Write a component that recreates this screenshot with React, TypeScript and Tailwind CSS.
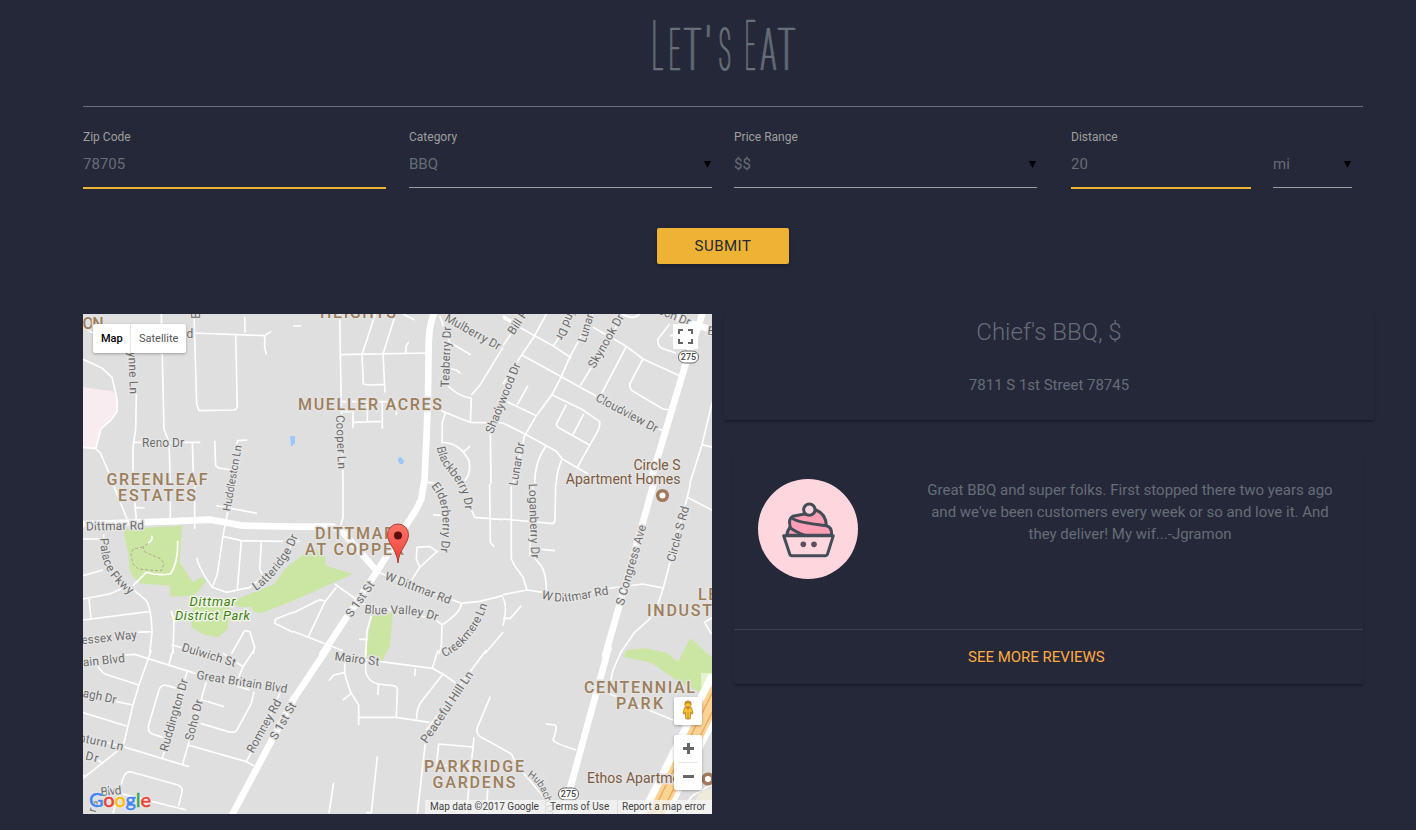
import React from "react";

const roadGroups: { at: string; thin: string; major?: string }[] = [
  {
    at: "translate(0 0) scale(.33333)",
    thin:
      "M0 136L58 163L87 190L102 255V292L85 317L54 345L38 404L52 417L75 470L90 510 M0 400L38 404 M0 40L25 55H40 M235 0L243 345L258 385L262 510 M160 240L158 345L150 400V510 M150 385H352 M328 385L332 510 M333 0L341 270L348 290L455 288L463 280L458 60 M330 57L545 65L565 52 M545 65V100L550 122 M485 8L486 57 M395 380L398 455L407 462L445 468 M493 378L465 380L460 390",
  },
  {
    at: "translate(210 0) scale(.33333)",
    thin:
      "M140 0L142 122L150 510 M0 36H25 M142 122L405 117 M247 0L207 122L211 210L228 213L275 211 M308 0L270 120L276 236 M347 85L340 95L338 117 M330 0L365 18 M142 263H310 M180 290V342 M180 325L268 322 M223 270V322 M268 265V344 M310 265V303 M145 293H180 M440 5L470 85L533 122 M460 210Q490 245 535 253L532 325 M470 163L490 168L502 178 M535 243L560 215L630 100 M445 290L530 325L630 327 M457 298L448 325L447 385Q500 385 528 440Q535 480 515 500 M512 413L531 397 M592 350L594 510 M405 505L440 508",
    major: "M426 -10Q408 30 407 90L405 250L400 380L394 510",
  },
  {
    at: "translate(420 0) scale(.33333)",
    thin:
      "M0 12L95 65L150 95L205 132 M130 0L95 65L50 132L0 210 M55 122L175 188L280 247 M465 345L490 352 M270 40L370 97L420 135L530 185 M270 0L200 130L175 188L148 240L100 305L65 365L30 510 M152 95L175 60 M370 97L295 240 M345 30L232 215 M420 135L380 210Q380 228 395 235L480 285L503 288 M148 243L235 285L290 322Q292 335 285 350L223 460 M190 272L160 330Q160 338 170 343L258 392 M242 300L210 362 M75 215L43 272 M0 257L100 305 M0 327L70 362L130 395L160 412L178 435L255 480 M130 395Q95 440 95 510 M178 435Q160 470 160 510 M355 0Q395 20 410 0 M500 30L465 75Q463 95 475 102L520 118 M500 65H520 M630 255L597 392L560 510 M597 392L630 400 M0 95L30 50 M0 5L25 20",
    major: "M600 -10L590 25L545 160L440 510 M490 -5L560 28L640 50",
  },
  {
    at: "translate(0 170) scale(.33333)",
    thin:
      "M90 0L132 105 M150 0L160 105 M155 70L185 72 M262 0V105 M335 0V135 M0 165H62V150 M0 275L60 258 M155 320L190 350Q205 375 207 445L200 510 M125 310L80 330L0 345 M18 345L24 405 M0 408L197 383 M155 445L207 443 M150 305L190 265Q220 275 262 270Q285 240 284 170 M435 80L420 155L403 270L388 310 M400 65L522 88 M342 222Q345 250 388 310L430 325L500 310L570 255L630 180 M420 157L475 170L600 172 M475 170L463 315 M535 175L530 255L537 270 M630 385L578 405L575 418L630 445 M265 380L273 410L270 510 M265 483L295 490 M445 510L485 440L500 442L515 490L510 510 M205 155Q213 165 195 178",
    major: "M0 120L260 112L385 107L480 125L630 128",
  },
  {
    at: "translate(210 170) scale(.33333)",
    thin:
      "M150 0V100L142 128 M590 0L592 175L603 188 M530 65L545 100L630 107 M420 92L445 95 M355 290L380 250L435 200 M380 250L370 225L372 190L410 187L435 205 M255 265L505 358L560 352L630 335 M505 358Q505 385 447 423L445 490L438 510 M425 405L447 423 M125 300L210 360L425 405 M130 310L95 355L45 460 M0 387L80 347L98 352 M0 442L150 500 M198 466H225 M235 395L222 440L218 510 M630 445L575 510 M0 172H20",
    major: "M0 128H120L150 145L255 265 M393 -5L385 45Q370 80 345 115L250 265L85 515",
  },
  {
    at: "translate(420 170) scale(.33333)",
    thin:
      "M25 0V225L35 245L60 280L72 318 M0 105L150 119L156 110L158 0 M90 0L80 215 M105 195L156 200 M90 215L105 235Q130 255 130 320 M0 332L72 318L120 325L190 340L325 312L420 300L480 312 M0 340Q15 370 0 425 M0 403H22L55 365 M562 0L553 40L480 315L465 360L440 405L395 445L350 510 M553 40L630 80 M630 400L605 415L625 450",
    major: "M452 0L305 520",
  },
  {
    at: "translate(0 336) scale(.33333)",
    thin:
      "M125 15L155 13L330 68L500 120 M205 0L168 105L150 165L120 290 M45 50Q60 72 75 75L168 105 M100 155L150 165 M0 188L130 228 M270 0L258 42 M0 260L120 290L318 350 M120 290L0 385 M45 330L60 342 M0 375L8 382 M312 65L238 325 M292 118L245 105Q232 107 228 120L197 225Q193 245 208 252L240 262 M370 95L298 345 M358 150L423 170 M353 220L435 245Q455 250 462 240L505 160L513 125 M315 285L490 335L512 347 M490 335L560 200L590 130 M513 0L480 50L460 100 M420 10L480 50 M90 490L120 385Q128 362 145 366L285 405Q300 412 297 425L287 468 M90 425L310 480",
    major: "M636 140L447 495",
  },
  {
    at: "translate(210 336) scale(.33333)",
    thin:
      "M155 40V68Q165 110 175 130L197 165V225 M155 68L122 75L108 92 M175 130L150 150 M218 0V65Q225 95 255 102L300 107Q315 110 313 120L310 200 M257 102L254 135 M197 202H310L410 217 M150 20L418 55L450 72L490 100 M367 55L365 78 M418 55L435 0 M450 72L385 155Q370 175 371 207 M580 0L400 240 M397 280L373 490 M592 140L552 235Q550 255 565 262L630 298 M540 291L437 282L430 345L540 350 M543 262L520 490 M253 320L235 488H220 M122 398L108 490 M585 400L580 490",
    major: "M107 -10L0 150",
  },
  {
    at: "translate(420 336) scale(.33333)",
    thin:
      "M0 298L25 312L45 350L130 450L140 490 M128 222L158 225Q163 235 150 270Q155 280 220 300 M357 0L330 60L315 130L510 210 M545 490Q550 440 590 425L630 400",
    major: "M318 -10L200 420L178 495",
  },
];

type Label = [string, number, number, number, number?, number?];

/* text, centre x, centre y, angle, length, size */
const roadLabels: Label[] = [
  ["Mulberry Dr", 473, 332, 29, 62],
  ["Teaberry Dr", 446, 357, -88, 61],
  ["Shadywood Dr", 503, 398, -68, 75],
  ["Cooper Ln", 341, 442, 88, 54],
  ["Cloudview Dr", 627, 413, 28, 69],
  ["Skynook Dr", 606, 341, -60, 60],
  ["Lunar Dr", 588, 321, -73, 44],
  ["Ruskind Dr", 571, 314, 115, 56],
  ["Bill Price", 523, 314, -57, 46],
  ["Mason Dr", 667, 313, 22, 50],
  ["Lunar Dr", 517, 464, -80, 44],
  ["Loganberry Dr", 534, 521, 88, 75],
  ["S Congress Ave", 631, 565, -74, 83],
  ["Circle S Rd", 678, 534, -75, 57],
  ["W Dittmar Rd", 418, 588, 21, 70],
  ["S 1st St", 360, 599, -55, 41],
  ["Mairo St", 357, 659, 7, 45],
  ["Peaceful Hill Ln", 447, 707, -56, 84],
  ["Great Britain Blvd", 242, 682, 9, 92],
  ["Romney Rd", 264, 726, -61, 59],
  ["S 1st St", 283, 721, -60, 41],
  ["Soho Dr", 194, 720, -76, 42],
  ["Ruddington Dr", 174, 715, -74, 75],
  ["Dulwich St", 209, 655, 17, 56],
  ["Chamberlain Blvd", 78, 663, -6, 94],
  ["Wessex Way", 104, 638, -6, 66],
  ["Armagh Dr", 89, 694, 12, 56],
  ["Vinturn Ln", 96, 741, 12, 56],
  ["Dr", 92, 757, 14, 13],
  ["Blvd", 111, 791, -5, 21],
  ["rs", 93, 806, -78, 12],
  ["Dittmar Rd", 115, 526, -1, 58],
  ["Huddleston Ln", 232, 478, -80, 67, 11],
  ["Reno Dr", 163, 443, 0, 42],
  ["Lynne Ln", 133, 370, 88, 48],
  ["d", 190, 334, 0, 7],
  ["B", 196, 315, -90, 8],
  ["E", 711, 331, 10, 8],
];

const curvedLabels = [
  { id: "elderberry", text: "Elderberry Dr", d: "M431 486C441 498 446 512 440 556", size: 12, length: 69 },
  { id: "blackberry", text: "Blackberry Dr", d: "M437 447C440 475 466 476 465 516", size: 12, length: 70 },
  { id: "dittmar-east", text: "W Dittmar Rd", d: "M541 598C565 607 585 597 618 593", size: 12, length: 69 },
  { id: "blue-valley", text: "Blue Valley Dr", d: "M364 613C385 617 405 608 442 623", size: 12, length: 74 },
  { id: "creekmere", text: "Creekmere Ln", d: "M444 657C462 650 482 628 489 599", size: 12, length: 70 },
  { id: "palace", text: "Palace Pkwy", d: "M100 538C101 570 112 582 138 601", size: 12, length: 67 },
  { id: "latteridge", text: "Latteridge Dr", d: "M256 591C275 578 290 558 299 534", size: 12, length: 70 },
  { id: "hubach", text: "Hubach Ln", d: "M527 776C540 783 546 797 550 824", size: 10, length: 47 },
];

const areaLabels: [string, number, number, number][] = [
  ["ON", 93, 323, 21],
  ["HEIGHTS", 358, 312, 76],
  ["MUELLER ACRES", 370, 404, 144],
  ["GREENLEAF", 157, 479, 101],
  ["ESTATES", 157, 495, 78],
  ["DITTMAR", 354.5, 533, 79],
  ["AT COPPER", 354.5, 549, 99],
  ["LEE", 713, 594, 30],
  ["INDUSTRIAL", 700, 610, 106],
  ["CENTENNIAL", 639.5, 687, 111],
  ["PARK", 639.5, 703, 47],
  ["PARKRIDGE", 474, 766, 100],
  ["GARDENS", 474, 782, 83],
];

function Highway({ x, y }: { x: number; y: number }) {
  return (
    <g transform={`translate(${x} ${y})`}>
      <rect x="-10" y="-6" width="20" height="12" rx="6" fill="#fff" stroke="#666" />
      <text textAnchor="middle" y="3.2" fontSize="9" fontWeight="500" fill="#444">275</text>
    </g>
  );
}

function MapDrawing() {
  return (
    <svg className="block h-[500px] w-[629px] font-['Roboto',sans-serif]" viewBox="0 0 629 500">
      <rect width="629" height="500" fill="#dfdfdf" />
      <g transform="scale(.33333)" fill="#f8ecf0">
        <path d="M0 220L90 232L102 255V292L85 317L54 345L38 404L0 400Z" />
      </g>
      <g fill="#9ec6fa">
        <path d="M207 122h5v8h-2v2h-2z" />
        <path d="M315 144l3-1 3 4-1 3-3 0-2-3z" />
      </g>
      <g fill="#cbe6a3">
        <g transform="translate(0 170) scale(.33333)">
          <path d="M120 135L298 125L290 235L330 295L355 278L370 290L350 318L330 335L262 338L260 305L170 298L148 275L140 255L135 205Z" />
          <path d="M330 350L440 345L435 435L405 460L365 452L325 430L328 395Z" />
          <path d="M440 355L500 330L575 300L605 255L690 190L725 215L728 245L810 270L630 350L535 388L510 382L505 368L470 370Z" />
        </g>
        <g transform="translate(210 170) scale(.33333)">
          <path d="M240 390L300 385L290 490L275 515L269 535L215 530L228 440Z" />
        </g>
        <g transform="translate(420 336) scale(.33333)">
          <path d="M360 20L370 0L430 -5L490 8L525 35L562 -35L630 25V110L600 130L545 105L490 70L445 38Z" />
        </g>
      </g>
      <path d="M60 233L50 235L48 240L50 250L55 255L78 257L81 250L78 245L62 238L60 233L68 227" fill="none" stroke="#b5a596" strokeDasharray="3 2" />
      <g fill="none" stroke="#fff" strokeLinejoin="round">
        {roadGroups.map((group) => (
          <g key={group.at} transform={group.at}>
            <path d={group.thin} strokeWidth="5" />
            {group.major && <path d={group.major} strokeWidth="20" />}
          </g>
        ))}
      </g>
      <g transform="translate(420 336) scale(.33333)" fill="none">
        <path d="M560 490L590 425L630 415V490Z" fill="#eeebdd" />
        <path d="M655 90L440 520" stroke="#fff" strokeWidth="84" />
        <path d="M655 100L447 515" stroke="#fbd394" strokeWidth="48" />
        <path d="M647 90L437 510M671 100L460 520" stroke="#e8ab5f" strokeWidth="4" />
      </g>
      <g transform="translate(-83 -314)" stroke="#e4e4e4" strokeWidth="3" strokeLinejoin="round" paintOrder="stroke">
        <g fill="#6c6c6c" fontSize="12" textAnchor="middle">
          {roadLabels.map(([text, x, y, angle, length, size], i) => (
            <text key={i} transform={`translate(${x} ${y}) rotate(${angle})`} y="4" textLength={length} fontSize={size ?? 12}>
              {text}
            </text>
          ))}
        </g>
        <g fill="#6c6c6c">
          {curvedLabels.map(({ id, text, d, size, length }) => (
            <React.Fragment key={id}>
              <path id={id} d={d} fill="none" stroke="none" />
              <text fontSize={size} textLength={length}>
                <textPath href={`#${id}`} textLength={length}>{text}</textPath>
              </text>
            </React.Fragment>
          ))}
        </g>
        <g fill="#9d7f5c" fontSize="16" fontWeight="500" textAnchor="middle">
          {areaLabels.map(([text, x, y, length]) => (
            <text key={text} x={x} y={y + 5.6} textLength={length}>
              {text}
            </text>
          ))}
        </g>
        <g fill="#7c5b40" fontSize="14">
          <text x="680.5" y="470" textAnchor="end">Circle S</text>
          <text x="680.5" y="484" textAnchor="end">Apartment Homes</text>
          <text x="587" y="783">Ethos Apartments</text>
        </g>
        <g fill="#3f7f12" fontSize="13" fontStyle="italic" textAnchor="middle" stroke="#f0f5e8">
          <text x="212.5" y="606" textLength="46">Dittmar</text>
          <text x="212.5" y="620" textLength="75">District Park</text>
        </g>
      </g>
      <g fill="#fff" stroke="#a1795c" strokeWidth="3.5">
        <circle cx="579.5" cy="181.5" r="4.8" />
        <circle cx="625" cy="465" r="4.8" />
      </g>
      <Highway x={605.5} y={43} />
      <Highway x={485.5} y={480} />
      <g transform="translate(315 0)">
        <path d="M0 249C-1 235 -10.5 230 -10.5 220.5A10.5 10.5 0 0 1 10.5 220.5C10.5 230 1 235 0 249Z" fill="url(#pin)" stroke="#b23a30" />
        <circle cy="221.5" r="4" fill="#5c100d" />
      </g>
      <defs>
        <linearGradient id="pin" x1="0" y1="0" x2="0" y2="1">
          <stop stopColor="#fb7469" />
          <stop offset="1" stopColor="#ef4035" />
        </linearGradient>
      </defs>
    </svg>
  );
}

function Pegman() {
  return (
    <svg className="h-[20px] w-[14px]" viewBox="0 0 14 20">
      <path d="M3.5 7.5h7l1.5 6-1.7.5-.6-2-.5 7H4.8l-.5-7-.6 2L2 13.5z" fill="#fbc02d" stroke="#a9812d" strokeWidth=".8" />
      <path d="M5 7.5h4L7 10z" fill="#e77726" />
      <path d="M7 12v7" stroke="#b98620" strokeWidth=".8" />
      <circle cx="7" cy="4" r="3.2" fill="#fbbf2a" stroke="#a9812d" strokeWidth=".8" />
      <path d="M4 2.8h6" stroke="#98752b" />
    </svg>
  );
}

function RestaurantMap() {
  return (
    <section className="relative h-[500px] w-[629px] shrink-0 overflow-hidden text-[11px]">
      <MapDrawing />
      <div className="absolute left-[10px] top-[10px] flex h-[29px] w-[93px] rounded-[2px] bg-white leading-[29px] shadow-[0_1px_3px_rgba(0,0,0,0.3)]">
        <span className="w-[38px] border-r border-[#e5e5e5] pl-[8px] font-medium text-black">Map</span>
        <span className="pl-[8px] text-[#565656]">Satellite</span>
      </div>
      <div className="absolute right-[14px] top-[10px] flex h-[25px] w-[25px] items-center justify-center bg-white">
        <svg className="h-[15px] w-[15px]" viewBox="0 0 15 15" fill="none" stroke="#666" strokeWidth="2">
          <path d="M1 5V1h4M10 1h4v4M14 10v4h-4M5 14H1v-4" />
        </svg>
      </div>
      <div className="absolute right-0 top-[359px] h-[14px] w-[11px] bg-white/50" />
      <div className="absolute bottom-[89px] right-[10px] flex h-[28px] w-[28px] items-center justify-center rounded-[2px] bg-white pb-[2px] shadow-[0_1px_3px_rgba(0,0,0,0.3)]">
        <Pegman />
      </div>
      <div className="absolute bottom-[24px] right-[10px] flex h-[55px] w-[28px] flex-col items-center rounded-[2px] bg-white shadow-[0_1px_3px_rgba(0,0,0,0.3)]">
        <svg className="h-[55px] w-[28px]" viewBox="0 0 28 55" stroke="#666" strokeWidth="3">
          <path d="M9 13.5h11M14.5 8v11M9 41.5h11" />
          <path d="M4 27.5h20" stroke="#e6e6e6" strokeWidth="1" />
        </svg>
      </div>
      <div className="absolute bottom-[3px] left-[6px] font-['Lato',sans-serif] text-[20px] font-medium leading-[24px] tracking-[-0.2px] [-webkit-text-stroke:0.5px_currentColor] [text-shadow:0_0_1px_#fff,0_0_2px_#fff]">
        <span className="text-[#4285f4]">G</span>
        <span className="text-[#ea4335]">o</span>
        <span className="text-[#fbbc05]">o</span>
        <span className="text-[#4285f4]">g</span>
        <span className="text-[#34a853]">l</span>
        <span className="text-[#ea4335]">e</span>
      </div>
      <div className="absolute bottom-0 right-0 flex h-[14px] w-[287px] bg-[#f5f5f5]/75 text-[10px] leading-[14px] text-[#444]">
        <span className="w-[120px] whitespace-nowrap pl-[5px]">Map data ©2017 Google</span>
        <span className="w-[72px] whitespace-nowrap border-l border-[#ddd] pl-[4px]">Terms of Use</span>
        <span className="whitespace-nowrap border-l border-[#ddd] pl-[4px]">Report a map error</span>
      </div>
    </section>
  );
}

const tall = "text-[70px]";
const small = "text-[60px]";

const letters = [
  { glyph: "L", box: "w-[16px]", look: `${tall} scale-x-[0.30] -ml-[2px]` },
  { glyph: "E", box: "w-[14px]", look: `${small} scale-x-[0.33] -ml-[1px]` },
  { glyph: "T", box: "w-[22px]", look: `${small} scale-x-[0.47]` },
  { glyph: "'", box: "w-[13px]", look: `${small} scale-x-[0.45]` },
  { glyph: "S", box: "w-[27px]", look: `${small} scale-x-[0.32]` },
  { glyph: " ", box: "w-0", look: small },
  { glyph: "E", box: "w-[15px]", look: `${tall} scale-x-[0.26] -ml-[1px]` },
  { glyph: "A", box: "w-[17px]", look: `${small} scale-x-[0.41]` },
  { glyph: "T", box: "w-[17px]", look: `${small} scale-x-[0.47]` },
];

function Title() {
  return (
    <header className="flex h-[107px] justify-center border-b border-[#6a6f78] pl-[3px]">
      <h1 className="h-[92px] whitespace-pre pt-px text-[0px] font-thin leading-[90px] text-[#677078] [-webkit-text-stroke:0.5px_#677078] [text-shadow:1px_0_#677078,-1px_0_#677078,2.4px_0_#677078,-2.4px_0_#677078]">
        {letters.map((letter, i) => (
          <span key={i} className={`inline-block ${letter.box}`}>
            <span className={`inline-block origin-left ${letter.look}`}>{letter.glyph}</span>
          </span>
        ))}
      </h1>
    </header>
  );
}

function Field({ label, value, width, select }: { label?: string; value: string; width: string; select?: boolean }) {
  return (
    <div className={`flex flex-col ${width}`}>
      <label className="h-[15px] text-[12px] leading-[15px] text-[#9e9e9e]">{label}</label>
      <div
        className={`flex items-start justify-between pt-[10px] leading-[18px] ${
          select ? "h-[43px] border-b border-[#9e9e9e]" : "h-[44px] border-b-2 border-[#eeb235]"
        }`}
      >
        <span>{value}</span>
        {select && (
          <svg className="mr-px mt-[6px] h-[7px] w-[7px]" viewBox="0 0 7 7">
            <path d="M0 0h7L3.5 7z" fill="#000" />
          </svg>
        )}
      </div>
    </div>
  );
}

function Cupcake() {
  return (
    <svg className="h-[100px] w-[100px]" viewBox="114 117 300 300">
      <circle cx="264" cy="267" r="150" fill="#fed7de" />
      <g stroke="#444d57" strokeWidth="9" strokeLinejoin="round" strokeLinecap="round">
        <path d="M200 286Q202 270 211 262Q204 236 218 229L250 223Q270 224 288 210Q318 222 319 257Q336 260 335 286Z" fill="#fe9fb6" />
        <path d="M215 233Q225 247 319 257M209 262Q225 275 255 286" fill="none" />
        <circle cx="268" cy="209" r="17" fill="#fed7de" />
        <path d="M191 287H340L322 344Q321 347 316 347H216Q211 347 210 344Z" fill="#fed7de" />
      </g>
      <circle cx="250" cy="313" r="8.5" fill="#5d4f5e" />
      <circle cx="282" cy="313" r="8.5" fill="#5d4f5e" />
    </svg>
  );
}

const cardShadow = "rounded-[2px] shadow-[0_2px_2px_0_rgba(0,0,0,0.14),0_1px_5px_0_rgba(0,0,0,0.06),0_3px_1px_-2px_rgba(0,0,0,0.2)]";

function Details() {
  return (
    <section className="flex flex-col">
      <div className={`flex h-[106px] w-[650px] flex-col items-center ${cardShadow}`}>
        <h2 className="pt-[4px] text-[24px] font-light leading-[28px]">Chief's BBQ, $</h2>
        <p className="pt-[28px] leading-[22px]">7811 S 1st Street 78745</p>
      </div>
      <article className={`ml-[10px] mt-[35px] flex h-[229px] w-[629px] flex-col ${cardShadow}`}>
        <div className="flex h-[174px] pl-[24px] pt-[24px]">
          <Cupcake />
          <p className="ml-[58px] w-[428px] text-center leading-[22px]">
            Great BBQ and super folks. First stopped there two years ago<br />
            and we've been customers every week or so and love it. And<br />
            they deliver! My wif...-Jgramon
          </p>
        </div>
        <div className="flex h-[55px] border-t border-[#3c4150] pl-[234px] leading-[54px] text-[#ffab40]">
          <a>SEE MORE REVIEWS</a>
        </div>
      </article>
    </section>
  );
}

export default function App() {
  return (
    <main className="min-h-[830px] w-full overflow-hidden bg-[#252839] pl-[83px] font-['Roboto',sans-serif] text-[15px] text-[#656d76]">
      <div className="w-[1280px]">
        <Title />
        <form className="pt-[23px]">
          <div className="flex h-[98px]">
            <Field label="Zip Code" value="78705" width="w-[303px]" />
            <Field label="Category" value="BBQ" width="ml-[23px] w-[303px]" select />
            <Field label="Price Range" value="$$" width="ml-[22px] w-[303px]" select />
            <Field label="Distance" value="20" width="ml-[34px] w-[180px]" />
            <Field value="mi" width="ml-[22px] w-[79px]" select />
          </div>
          <div className="flex h-[86px] items-start justify-center">
            <button
              type="button"
              className="h-[36px] w-[132px] rounded-[2px] bg-[#eeb235] leading-[36px] tracking-[0.5px] text-[#252839] shadow-[0_2px_2px_0_rgba(0,0,0,0.14),0_1px_5px_0_rgba(0,0,0,0.12)]"
            >
              SUBMIT
            </button>
          </div>
        </form>
      </div>
      <div className="flex gap-[12px]">
        <RestaurantMap />
        <Details />
      </div>
    </main>
  );
}
